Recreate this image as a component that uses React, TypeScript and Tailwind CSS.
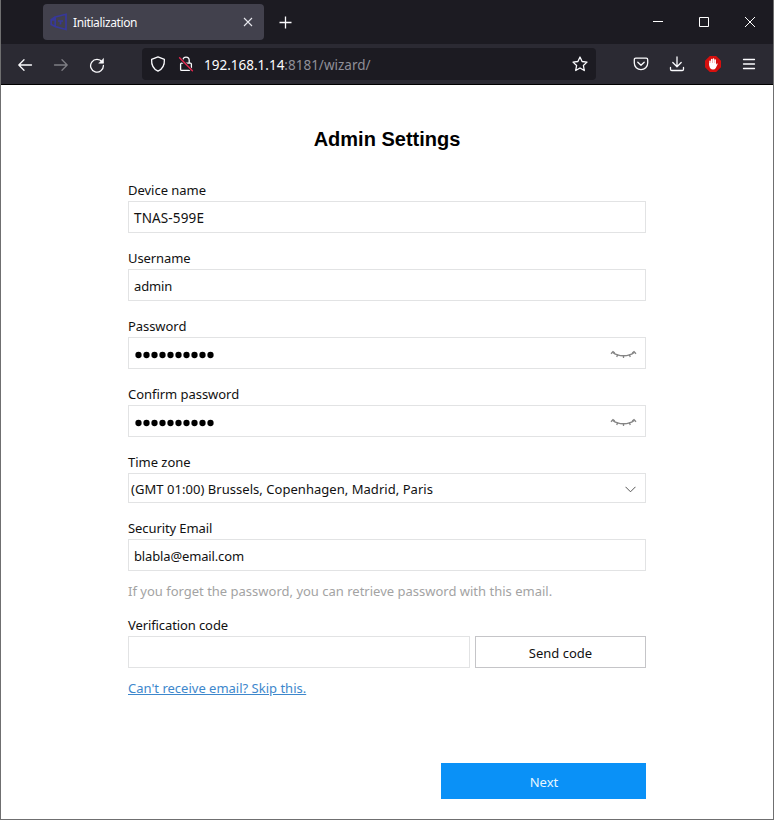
import type { ReactNode } from "react";

const UI = "font-['Noto_Sans','Segoe_UI',sans-serif]";

function Label({ text, track }: { text: string; track: string }) {
  return <label className={`block h-[21px] text-[13px] leading-[20px] whitespace-nowrap text-[#111] ${track}`}>{text}</label>;
}

function Box({ children, className = "h-8 pl-[5px]" }: { children?: ReactNode; className?: string }) {
  return (
    <div className={`flex items-center justify-between border border-[#e2e3e4] bg-white text-[13px] leading-[20px] whitespace-nowrap text-[#111] ${className}`}>
      {children}
    </div>
  );
}

function ClosedEye() {
  return (
    <svg className="mt-px mr-[8px] h-[10px] w-[28px]" viewBox="0 0 28 10" fill="none" stroke="#858585">
      <path d="M3.5 3.2C9.5 8 19.5 8 25.5 3.2" strokeWidth="1.4" />
      <path d="M2 4.8L4 2.6L5.8 4M8.8 5.5L7.7 8M14.5 6.5V9M20.2 5.5L21.3 8M27 4.8L25 2.6L23.2 4" strokeWidth="1.3" />
    </svg>
  );
}

function Dots() {
  return (
    <svg className="ml-[1px] mt-[3px] h-[8px] w-[80px]" viewBox="0 0 80 8" fill="#000">
      {Array.from({ length: 10 }, (_, i) => (
        <circle key={i} cx={3.5 + i * 8} cy="4" r="3.15" />
      ))}
    </svg>
  );
}

function TitleBar() {
  return (
    <div className="flex h-11 items-start bg-[#1c1b22] pt-1 text-[#fbfbfe]">
      <div className="ml-[42px] flex h-9 w-[221px] items-center rounded-[4px] bg-[#42414d] pl-[7px]">
        <svg className="h-[18px] w-[18px]" viewBox="0 0 18 18" fill="none" stroke="#37389a" strokeWidth="1.7">
          <path d="M5.2 4L16 1.3V16.5L5.2 13.6ZM5.2 4L1.2 6.8V11.5L5.2 13.6M1.2 6.8H5.2M8 8H13M10.5 8V11.5" />
        </svg>
        <span className="mt-[2px] ml-[5px] text-[12px] leading-[18px] tracking-[-0.38px]">Initialization</span>
        <svg className="mr-[11px] ml-auto h-[10px] w-[10px]" viewBox="0 0 10 10" stroke="#e8e8ee" strokeWidth="1.1">
          <path d="M1 1L9 9M9 1L1 9" />
        </svg>
      </div>
      <svg className="mt-[12px] ml-[15px] h-[13px] w-[13px]" viewBox="0 0 13 13" stroke="#fbfbfe" strokeWidth="1.3">
        <path d="M6.5 .5V12.5M.5 6.5H12.5" />
      </svg>
      <div className="mt-[12px] mr-[17px] ml-auto flex gap-[34px]">
        <svg className="h-3 w-3" viewBox="0 0 12 12" stroke="#fff"><path d="M1 5.5H11" /></svg>
        <svg className="h-3 w-3" viewBox="0 0 12 12" stroke="#fff" fill="none"><path d="M1.5 1.5H10.5V10.5H1.5Z" /></svg>
        <svg className="h-3 w-3" viewBox="0 0 12 12" stroke="#fff"><path d="M1 1L11 11M11 1L1 11" /></svg>
      </div>
    </div>
  );
}

function Icon({ children, className = "" }: { children: ReactNode; className?: string }) {
  return (
    <svg className={`h-4 w-4 shrink-0 ${className}`} viewBox="0 0 16 16" fill="none" stroke="#fbfbfe" strokeWidth="1.3" strokeLinecap="round" strokeLinejoin="round">
      {children}
    </svg>
  );
}

function Toolbar() {
  return (
    <div className="flex h-[41px] items-center border-b border-black bg-[#2b2a33] pr-[16px] pl-[16px]">
      <Icon className="mt-px"><path d="M14.5 8H1.8M7 2.8L1.8 8L7 13.2" /></Icon>
      <Icon className="mt-px ml-5 opacity-40"><path d="M1.5 8H14.2M9 2.8L14.2 8L9 13.2" /></Icon>
      <Icon className="mt-px ml-5">
        <path d="M13.2 5A6.4 6.4 0 1 0 14.4 8.5" />
        <path d="M14.5 1.8V6.2H10.1Z" fill="#fbfbfe" strokeWidth="0.6" />
      </Icon>
      <div className="ml-[37px] flex h-8 w-[454px] items-center rounded-[4px] bg-[#1c1b22] pr-2 pl-2">
        <Icon><path d="M8 .9L14.4 3.3C14.7 9 12.5 13.2 8 15.2C3.5 13.2 1.3 9 1.6 3.3Z" /></Icon>
        <Icon className="ml-3">
          <path d="M4.8 7V4.3A3.2 3.2 0 0 1 11.2 4.3V7M3.6 7.2H12.4Q13.4 7.2 13.4 8.2V13.4Q13.4 14.4 12.4 14.4H3.6Q2.6 14.4 2.6 13.4V8.2Q2.6 7.2 3.6 7.2Z" />
          <path d="M2.2 2.5L14 14.5" stroke="#1c1b22" strokeWidth="3" />
          <path d="M1.6 1.8L14.4 14.8" stroke="#e22850" strokeWidth="1.5" />
        </Icon>
        <span className="mt-[2px] ml-[10px] text-[13.5px] leading-[20px] whitespace-nowrap text-[#fbfbfe]">
          192.168.1.14<span className="text-[#8f8f98]">:8181/wizard/</span>
        </span>
        <Icon className="ml-auto"><path d="M8 1L10.1 5.5L15 6.1L11.4 9.5L12.3 14.5L8 12L3.7 14.5L4.6 9.5L1 6.1L5.9 5.5Z" /></Icon>
      </div>
      <Icon className="ml-[37px]">
        <path d="M2.8 2.2H13.2Q14.7 2.2 14.7 3.7V7A6.7 6.7 0 0 1 1.3 7V3.7Q1.3 2.2 2.8 2.2ZM4.8 6.2L8 9.3L11.2 6.2" />
      </Icon>
      <Icon className="ml-5"><path d="M8 1V10.5M3.8 6.5L8 10.7L12.2 6.5M1.5 11.5V13.2Q1.5 14.5 2.8 14.5H13.2Q14.5 14.5 14.5 13.2V11.5" /></Icon>
      <svg className="ml-5 h-4 w-4 shrink-0" viewBox="0 0 16 16">
        <path d="M4.8 0H11.2L16 4.8V11.2L11.2 16H4.8L0 11.2V4.8Z" fill="#d5100e" />
        <path d="M5 5.2V9M6.7 3.5V9M8.5 3V9M10.2 4V9" stroke="#fff" strokeWidth="1.5" strokeLinecap="round" />
        <path d="M4.3 7H11V8.8L11.8 7.6Q12.9 7 12.7 8L10.8 11.9Q9.9 13.4 8 13.4Q4.7 13.4 4.3 9.5Z" fill="#fff" />
      </svg>
      <Icon className="ml-5"><path d="M2.5 3.5H13.5M2.5 8H13.5M2.5 12.5H13.5" /></Icon>
    </div>
  );
}

export default function App() {
  return (
    <div className={`flex h-[820px] w-[774px] flex-col overflow-hidden border-x border-b border-[#6f6f70] bg-white ${UI}`}>
      <TitleBar />
      <Toolbar />
      <main className="mx-auto w-[518px]">
        <h1 className="mt-[41px] h-[26px] text-center font-['Liberation_Sans',Arial,sans-serif] text-[20px] leading-[26px] font-bold text-black">Admin Settings</h1>
        <div className="mt-[28px] flex flex-col gap-[15px]">
          <div><Label text="Device name" track="tracking-[-0.02px]" /><Box><span className="mt-[2px] text-[13.5px] tracking-[0.14px]">TNAS-599E</span></Box></div>
          <div><Label text="Username" track="tracking-[-0.1px]" /><Box><span className="mt-[2px] tracking-[-0.12px]">admin</span></Box></div>
          <div><Label text="Password" track="tracking-[-0.06px]" /><Box><Dots /><ClosedEye /></Box></div>
          <div><Label text="Confirm password" track="tracking-[-0.04px]" /><Box><Dots /><ClosedEye /></Box></div>
          <div>
            <Label text="Time zone" track="tracking-[-0.03px]" />
            <Box className="h-[30px] pl-[2px]">
              <span className="mt-[2px] tracking-[0.04px]">(GMT 01:00) Brussels, Copenhagen, Madrid, Paris</span>
              <svg className="mt-[3px] mr-[9px] h-[7px] w-[11px]" viewBox="0 0 11 7" fill="none" stroke="#555"><path d="M.5 .8L5.5 5.8L10.5 .8" /></svg>
            </Box>
          </div>
          <div>
            <Label text="Security Email" track="tracking-[-0.09px]" />
            <Box><span className="mt-[2px] tracking-[-0.14px]">blabla@email.com</span></Box>
            <p className="mt-[10px] text-[13px] leading-[20px] whitespace-nowrap text-[#a3a3a3]">If you forget the password, you can retrieve password with this email.</p>
          </div>
          <div className="-mt-[1px]">
            <Label text="Verification code" track="tracking-[-0.1px]" />
            <div className="flex gap-[5px]">
              <Box className="h-8 w-[342px]" />
              <button className="h-8 w-[171px] border border-[#c5c5c8] bg-white pt-[2px] text-[13px] leading-[20px] text-[#111]">Send code</button>
            </div>
            <a className="mt-[10px] block text-[13px] leading-[20px] whitespace-nowrap text-[#3d87cc] underline">Can't receive email? Skip this.</a>
          </div>
        </div>
        <button className="mt-[65px] ml-auto block h-9 w-[205px] bg-[#0a91f7] pt-[2px] pl-px text-[13px] leading-[20px] text-[#e6f7ff]">Next</button>
      </main>
    </div>
  );
}
